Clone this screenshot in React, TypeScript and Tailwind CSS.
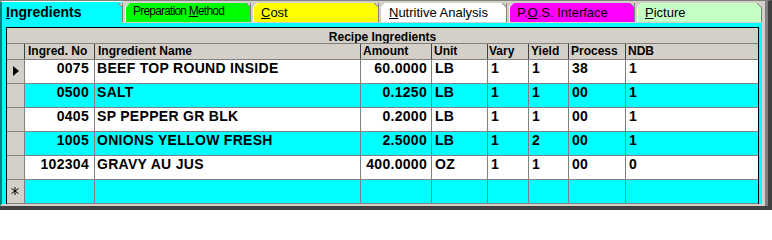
import React from "react";

type Row = {
  no: string;
  name: string;
  amount: string;
  unit: string;
  vary: string;
  yld: string;
  process: string;
  ndb: string;
};

const rows: Row[] = [
  { no: "0075", name: "BEEF TOP ROUND INSIDE", amount: "60.0000", unit: "LB", vary: "1", yld: "1", process: "38", ndb: "1" },
  { no: "0500", name: "SALT", amount: "0.1250", unit: "LB", vary: "1", yld: "1", process: "00", ndb: "1" },
  { no: "0405", name: "SP PEPPER GR BLK", amount: "0.2000", unit: "LB", vary: "1", yld: "1", process: "00", ndb: "1" },
  { no: "1005", name: "ONIONS YELLOW FRESH", amount: "2.5000", unit: "LB", vary: "1", yld: "2", process: "00", ndb: "1" },
  { no: "102304", name: "GRAVY AU JUS", amount: "400.0000", unit: "OZ", vary: "1", yld: "1", process: "00", ndb: "0" },
];

const cols = "grid grid-cols-[18px_70px_266px_71px_56px_41px_40px_57px_132px]";

function Tab({
  bg,
  small,
  last,
  children,
}: {
  bg: string;
  small?: boolean;
  last?: boolean;
  children: React.ReactNode;
}) {
  const edge = last
    ? "shadow-[inset_1px_0_0_#808080,inset_3px_0_0_#d4d0c8,inset_4px_0_0_#ffffff,inset_-1px_0_0_#808080]"
    : "shadow-[inset_1px_0_0_#808080,inset_3px_0_0_#d4d0c8,inset_4px_0_0_#ffffff]";
  return (
    <div
      className={`relative mt-[2px] h-[20px] w-[128px] border-b border-b-[#d4d0c8] pl-[11px] ${edge} ${bg} ${
        small ? "text-[12px] leading-[16px] tracking-[-0.8px]" : "text-[13px] leading-[19px]"
      }`}
    >
      {/* notch between tabs */}
      <svg className="absolute left-[-5px] top-0" width="14" height="6" viewBox="0 0 14 6">
        <polygon points="1,0 5,0 5,4" fill="#d4d0c8" />
        <line x1="1" y1="0" x2="5.5" y2="4.5" stroke="#808080" strokeWidth="1" />
        <polygon points="8,0 12,0 8,4" fill="#d4d0c8" />
        <line x1="12.5" y1="0" x2="8" y2="4.5" stroke="#ffffff" strokeWidth="1" />
      </svg>
      {last && (
        <svg className="absolute right-0 top-0" width="5" height="5" viewBox="0 0 5 5">
          <polygon points="0,0 5,0 5,5" fill="#d4d0c8" />
          <line x1="0" y1="0" x2="5" y2="5" stroke="#808080" strokeWidth="1" />
        </svg>
      )}
      {children}
    </div>
  );
}

function Pointer() {
  return (
    <svg className="ml-[6px] mt-[6px] block" width="6" height="10" viewBox="0 0 6 10">
      <polygon points="0,0 6,5 0,10" fill="#000" />
    </svg>
  );
}

function NewRecord() {
  return (
    <svg className="ml-[4px] mt-[7px] block" width="8" height="8" viewBox="0 0 8 8">
      <line x1="4" y1="0" x2="4" y2="8" stroke="#000" strokeWidth="1" />
      <line x1="0.5" y1="1.5" x2="7.5" y2="6.5" stroke="#000" strokeWidth="1" />
      <line x1="0.5" y1="6.5" x2="7.5" y2="1.5" stroke="#000" strokeWidth="1" />
    </svg>
  );
}

export default function App() {
  return (
    <div className="h-[210px] w-[772px] overflow-hidden border-t border-r-4 border-b-4 border-t-[#808080] border-r-[#404040] border-b-[#404040] bg-[#d4d0c8] font-['Liberation_Sans',Arial,sans-serif] text-black">
      <div className="h-full border-r-[3px] border-r-[#808080]">
        <div className="flex h-full flex-col border-r-[3px] border-r-[#d4d0c8]">
          {/* tab strip */}
          <div className="flex h-[22px] shrink-0">
            <div className="h-[22px] w-[122px] border-l-2 border-t border-l-[#008080] border-t-white bg-[#00ffff] pl-[4px] text-[14px] font-bold leading-[21px]">
              <span className="underline">I</span>ngredients
            </div>
            <Tab bg="bg-[#00ff00]" small>
              Preparation <span className="underline">M</span>ethod
            </Tab>
            <Tab bg="bg-[#ffff00]">
              <span className="underline">C</span>ost
            </Tab>
            <Tab bg="bg-white">
              <span className="underline">N</span>utritive Analysis
            </Tab>
            <Tab bg="bg-[#ff00ff]">
              P.<span className="underline">O</span>.S. Interface
            </Tab>
            <Tab bg="bg-[#c4ffc4]" last>
              <span className="underline">P</span>icture
            </Tab>
          </div>

          {/* tab page */}
          <div className="flex-1 border-b-2 border-l-2 border-b-[#d4d0c8] border-l-[#008080] bg-[#00ffff] pt-[4px] pl-[4px] pr-[3px]">
            <div className="border-x border-t border-black bg-[#d4d0c8]">
              <div className="h-[16px] overflow-hidden border-b border-b-[#808080] pt-[2px] text-center text-[12px] font-bold leading-[15px]">
                Recipe Ingredients
              </div>
              <div className={`${cols} h-[16px] border-b border-b-[#808080] text-[12px] font-bold leading-[15px]`}>
                <div className="border-r border-r-[#404040]" />
                <div className="border-r border-r-[#404040] pl-[3px]">Ingred. No</div>
                <div className="border-r border-r-[#404040] pl-[3px]">Ingredient Name</div>
                <div className="border-r border-r-[#404040] pl-[2px]">Amount</div>
                <div className="border-r border-r-[#404040] pl-[2px]">Unit</div>
                <div className="border-r border-r-[#404040] pl-[1px]">Vary</div>
                <div className="border-r border-r-[#404040] pl-[2px]">Yield</div>
                <div className="border-r border-r-[#404040] pl-[2px]">Process</div>
                <div className="pl-[2px]">NDB</div>
              </div>

              {rows.map((r, i) => (
                <div
                  key={r.no}
                  className={`${cols} h-[24px] border-b border-b-[#808080] text-[14px] font-bold leading-[17px] tracking-[0.3px] ${
                    i % 2 === 0 ? "bg-white" : "bg-[#00ffff]"
                  }`}
                >
                  <div className="border-r border-r-[#808080] bg-[#d4d0c8]">{i === 0 && <Pointer />}</div>
                  <div className="border-r border-r-[#808080] pr-[5px] text-right">{r.no}</div>
                  <div className="border-r border-r-[#808080] pl-[2px]">{r.name}</div>
                  <div className="border-r border-r-[#808080] pr-[4px] text-right">{r.amount}</div>
                  <div className="border-r border-r-[#808080] pl-[3px]">{r.unit}</div>
                  <div className="border-r border-r-[#808080] pl-[3px]">{r.vary}</div>
                  <div className="border-r border-r-[#808080] pl-[3px]">{r.yld}</div>
                  <div className="border-r border-r-[#808080] pl-[3px]">{r.process}</div>
                  <div className="pl-[3px]">{r.ndb}</div>
                </div>
              ))}

              {/* new record row */}
              <div className={`${cols} h-[24px] border-b border-b-[#808080] bg-[#00ffff]`}>
                <div className="border-r border-r-[#808080] bg-[#d4d0c8]">
                  <NewRecord />
                </div>
                <div className="border-r border-r-[#808080]" />
                <div className="border-r border-r-[#808080]" />
                <div className="border-r border-r-[#808080]" />
                <div className="border-r border-r-[#808080]" />
                <div className="border-r border-r-[#808080]" />
                <div className="border-r border-r-[#808080]" />
                <div className="border-r border-r-[#808080]" />
                <div />
              </div>
            </div>
          </div>
        </div>
      </div>
    </div>
  );
}
